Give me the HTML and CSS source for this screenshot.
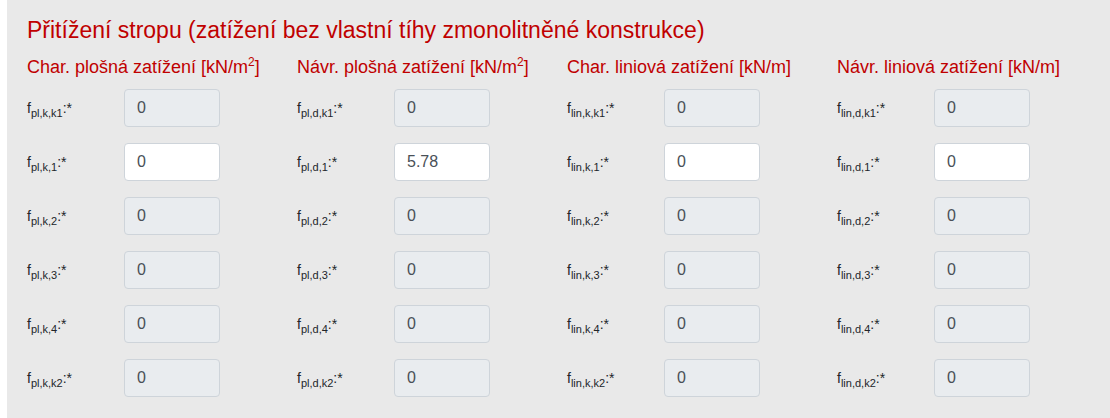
FILE: index.html
```html
<!DOCTYPE html>
<html lang="cs">
<head>
<meta charset="utf-8">
<link rel="stylesheet" href="styles.css">
</head>
<body>
<div class="panel">
  <h2 class="title">Přitížení stropu (zatížení bez vlastní tíhy zmonolitněné konstrukce)</h2>
  <div class="grid">
    <div class="col">
      <h3 class="colhead">Char. plošná zatížení [kN/m<sup>2</sup>]</h3>
      <div class="row"><label class="lbl">f<sub>pl,k,k1</sub>:*</label><input class="fc" value="0" disabled></div>
      <div class="row"><label class="lbl">f<sub>pl,k,1</sub>:*</label><input class="fc" value="0"></div>
      <div class="row"><label class="lbl">f<sub>pl,k,2</sub>:*</label><input class="fc" value="0" disabled></div>
      <div class="row"><label class="lbl">f<sub>pl,k,3</sub>:*</label><input class="fc" value="0" disabled></div>
      <div class="row"><label class="lbl">f<sub>pl,k,4</sub>:*</label><input class="fc" value="0" disabled></div>
      <div class="row"><label class="lbl">f<sub>pl,k,k2</sub>:*</label><input class="fc" value="0" disabled></div>
    </div>
    <div class="col">
      <h3 class="colhead">Návr. plošná zatížení [kN/m<sup>2</sup>]</h3>
      <div class="row"><label class="lbl">f<sub>pl,d,k1</sub>:*</label><input class="fc" value="0" disabled></div>
      <div class="row"><label class="lbl">f<sub>pl,d,1</sub>:*</label><input class="fc" value="5.78"></div>
      <div class="row"><label class="lbl">f<sub>pl,d,2</sub>:*</label><input class="fc" value="0" disabled></div>
      <div class="row"><label class="lbl">f<sub>pl,d,3</sub>:*</label><input class="fc" value="0" disabled></div>
      <div class="row"><label class="lbl">f<sub>pl,d,4</sub>:*</label><input class="fc" value="0" disabled></div>
      <div class="row"><label class="lbl">f<sub>pl,d,k2</sub>:*</label><input class="fc" value="0" disabled></div>
    </div>
    <div class="col">
      <h3 class="colhead">Char. liniová zatížení [kN/m]</h3>
      <div class="row"><label class="lbl">f<sub>lin,k,k1</sub>:*</label><input class="fc" value="0" disabled></div>
      <div class="row"><label class="lbl">f<sub>lin,k,1</sub>:*</label><input class="fc" value="0"></div>
      <div class="row"><label class="lbl">f<sub>lin,k,2</sub>:*</label><input class="fc" value="0" disabled></div>
      <div class="row"><label class="lbl">f<sub>lin,k,3</sub>:*</label><input class="fc" value="0" disabled></div>
      <div class="row"><label class="lbl">f<sub>lin,k,4</sub>:*</label><input class="fc" value="0" disabled></div>
      <div class="row"><label class="lbl">f<sub>lin,k,k2</sub>:*</label><input class="fc" value="0" disabled></div>
    </div>
    <div class="col">
      <h3 class="colhead">Návr. liniová zatížení [kN/m]</h3>
      <div class="row"><label class="lbl">f<sub>lin,d,k1</sub>:*</label><input class="fc" value="0" disabled></div>
      <div class="row"><label class="lbl">f<sub>lin,d,1</sub>:*</label><input class="fc" value="0"></div>
      <div class="row"><label class="lbl">f<sub>lin,d,2</sub>:*</label><input class="fc" value="0" disabled></div>
      <div class="row"><label class="lbl">f<sub>lin,d,3</sub>:*</label><input class="fc" value="0" disabled></div>
      <div class="row"><label class="lbl">f<sub>lin,d,4</sub>:*</label><input class="fc" value="0" disabled></div>
      <div class="row"><label class="lbl">f<sub>lin,d,k2</sub>:*</label><input class="fc" value="0" disabled></div>
    </div>
  </div>
</div>
</body>
</html>
```
FILE: styles.css
```css
html, body {
  margin: 0;
  padding: 0;
  background: #fff;
}
body {
  font-family: "Liberation Sans", Arial, sans-serif;
  color: #212529;
  padding-left: 7px;
  height: 418px;
  overflow: hidden;
}
.panel {
  background: #e9e9e9;
  padding: 16px 20px 40px 20px;
  min-height: 418px;
  box-sizing: border-box;
}
.title {
  margin: 0 0 10px 0;
  font-size: 23px;
  font-weight: 400;
  line-height: 29px;
  color: #c00000;
}
.grid {
  display: grid;
  grid-template-columns: repeat(4, 270px);
}
.col {
  display: flex;
  flex-direction: column;
  gap: 16px;
}
.colhead {
  margin: 0 0 -6px 0;
  font-size: 18px;
  font-weight: 400;
  line-height: 24px;
  color: #c00000;
}
.colhead sup {
  font-size: 12px;
  line-height: 0;
  vertical-align: 7px;
}
.row {
  display: flex;
  align-items: center;
  height: 38px;
}
.lbl {
  width: 97px;
  font-size: 14px;
  color: #212529;
}
.lbl sub {
  font-size: 11px;
  line-height: 0;
  vertical-align: -4px;
}
.fc {
  width: 96px;
  height: 38px;
  box-sizing: border-box;
  padding: 6px 12px;
  border: 1px solid #ced4da;
  border-radius: 4px;
  background: #fff;
  font-family: "Liberation Sans", Arial, sans-serif;
  font-size: 16px;
  color: #495057;
  margin: 0;
}
.fc:disabled {
  background: #e9ecef;
  color: #495057;
  opacity: 1;
}
```
